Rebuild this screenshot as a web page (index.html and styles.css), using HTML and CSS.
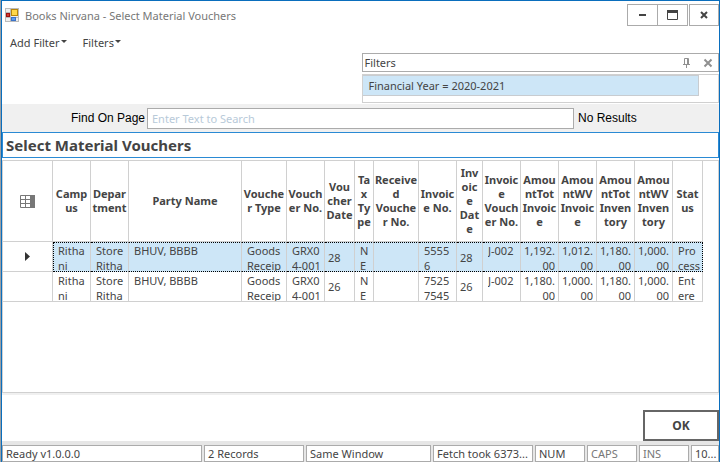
FILE: index.html
```html
<!DOCTYPE html>
<html lang="en">
<head>
<meta charset="utf-8">
<title>Books Nirvana - Select Material Vouchers</title>
<link rel="stylesheet" href="styles.css">
</head>
<body>
<div class="window">
  <header class="titlebar">
    <svg class="app-icon" width="14" height="14" viewBox="0 0 14 14" aria-hidden="true">
      <rect x="0.5" y="0.5" width="13" height="13" fill="#eee" stroke="#bbb"/>
      <path d="M1 9.500h12M5.500 1v12M1 4.500h5" stroke="#bbb" fill="none"/>
      <rect x="6.500" y="1.500" width="6" height="6" fill="#ffd84a" stroke="#b8860b"/>
      <rect x="1.500" y="5.500" width="3" height="3" fill="#d33a2c" stroke="#a01010"/>
      <rect x="6.500" y="9.500" width="4" height="3" fill="#5b9bf0" stroke="#3a72c8"/>
    </svg>
    <h1 class="title">Books Nirvana - Select Material Vouchers</h1>
    <div class="window-buttons">
      <button type="button" class="win-btn" aria-label="Minimize"><svg width="12" height="12" viewBox="0 0 12 12"><path d="M2 6h7" stroke="#444" stroke-width="2"/></svg></button>
      <button type="button" class="win-btn" aria-label="Maximize"><svg width="12" height="12" viewBox="0 0 12 12"><path d="M0.500 1.500h10v9h-10z" fill="none" stroke="#444"/><path d="M0 2.500h11" stroke="#444" stroke-width="3"/></svg></button>
      <button type="button" class="win-btn close" aria-label="Close"><svg width="12" height="12" viewBox="0 0 12 12"><path d="M3 3l6 6M9 3l-6 6" stroke="#444" stroke-width="2"/></svg></button>
    </div>
  </header>
  <nav class="menu">
    <button type="button" class="menu-item">Add Filter<svg width="6" height="3" viewBox="0 0 6 3"><path d="M0 0h6L3 3z" fill="#444"/></svg></button>
    <button type="button" class="menu-item">Filters<svg width="6" height="3" viewBox="0 0 6 3"><path d="M0 0h6L3 3z" fill="#444"/></svg></button>
  </nav>
  <section class="filters">
    <div class="filters-head">
      <span class="filters-name">Filters</span>
      <button type="button" class="icon-btn" aria-label="Pin"><svg width="9" height="12" viewBox="0 0 9 12"><path d="M2.500 7V1.500h4V7M1 7.500h7M4.500 8v3M5.500 2v5" fill="none" stroke="#909090"/></svg></button>
      <button type="button" class="icon-btn" aria-label="Close filters"><svg width="10" height="10" viewBox="0 0 10 10"><path d="M1.500 1.500l7 7M8.500 1.500l-7 7" stroke="#909090" stroke-width="2"/></svg></button>
    </div>
    <div class="filters-list"><div class="filter-item">Financial Year = 2020-2021</div></div>
  </section>
  <form class="find">
    <label class="find-label" for="find">Find On Page</label>
    <input class="find-input" id="find" type="text" placeholder="Enter Text to Search">
    <span class="find-result">No Results</span>
  </form>
  <h2 class="heading">Select Material Vouchers</h2>
  <main class="content">
    <table class="grid">
      <colgroup>
        <col class="w50"><col class="w38"><col class="w38"><col class="w113"><col class="w45"><col class="w38"><col class="w30"><col class="w19"><col class="w45"><col class="w38"><col class="w26"><col class="w38"><col class="w38"><col class="w38"><col class="w38"><col class="w38"><col class="w30"><col>
      </colgroup>
      <thead>
        <tr>
          <th><svg class="grid-icon" width="15" height="13" viewBox="0 0 15 13" aria-hidden="true"><path d="M0.500 0.500h14v12h-14zM0 4.500h10M0 8.500h10M5.500 0v13" fill="none" stroke="#777"/><path d="M10 0h5v13h-5z" fill="#777"/></svg></th>
          <th>Camp<br>us</th><th>Depar<br>tment</th><th>Party Name</th><th>Vouche<br>r Type</th><th>Vouch<br>er No.</th><th>Vou<br>cher<br>Date</th><th>Ta<br>x<br>Ty<br>pe</th><th>Receive<br>d<br>Vouche<br>r No.</th><th>Invoic<br>e No.</th><th>Inv<br>oic<br>e<br>Dat<br>e</th><th>Invoic<br>e<br>Vouch<br>er No.</th><th>Amou<br>ntTot<br>Invoic<br>e</th><th>Amou<br>ntWV<br>Invoic<br>e</th><th>Amou<br>ntTot<br>Inven<br>tory</th><th>Amou<br>ntWV<br>Inven<br>tory</th><th>Stat<br>us</th><th class="filler"></th>
        </tr>
      </thead>
      <tbody>
        <tr class="selected">
          <td class="marker"><svg width="5" height="9" viewBox="0 0 5 9" aria-hidden="true"><path d="M0 0l5 4.500L0 9z" fill="#333"/></svg></td>
          <td class="first"><div class="cell">Ritha<br>ni</div></td><td><div class="cell">Store<br>Ritha</div></td><td><div class="cell">BHUV, BBBB</div></td><td><div class="cell">Goods<br>Receip</div></td><td><div class="cell">GRX0<br>4-001</div></td><td class="day">28</td><td><div class="cell">N<br>E</div></td><td></td><td><div class="cell">5555<br>6</div></td><td class="day">28</td><td><div class="cell">J-002</div></td><td class="num"><div class="cell">1,192.<br>00</div></td><td class="num"><div class="cell">1,012.<br>00</div></td><td class="num"><div class="cell">1,180.<br>00</div></td><td class="num"><div class="cell">1,000.<br>00</div></td><td class="last"><div class="cell">Pro<br>cess</div></td><td class="filler"></td>
        </tr>
        <tr>
          <td class="marker"></td>
          <td><div class="cell">Ritha<br>ni</div></td><td><div class="cell">Store<br>Ritha</div></td><td><div class="cell">BHUV, BBBB</div></td><td><div class="cell">Goods<br>Receip</div></td><td><div class="cell">GRX0<br>4-001</div></td><td class="day">26</td><td><div class="cell">N<br>E</div></td><td></td><td><div class="cell">7525<br>7545</div></td><td class="day">26</td><td><div class="cell">J-002</div></td><td class="num"><div class="cell">1,180.<br>00</div></td><td class="num"><div class="cell">1,000.<br>00</div></td><td class="num"><div class="cell">1,180.<br>00</div></td><td class="num"><div class="cell">1,000.<br>00</div></td><td class="last"><div class="cell">Ent<br>ere</div></td><td class="filler"></td>
        </tr>
      </tbody>
    </table>
  </main>
  <div class="actions"><button type="button" class="ok">OK</button></div>
  <footer class="status">
    <span class="panel s200">Ready v1.0.0.0</span>
    <span class="panel s100">2 Records</span>
    <span class="panel s125">Same Window</span>
    <span class="panel s100">Fetch took 6373...</span>
    <span class="panel s50">NUM</span>
    <span class="panel s50 off">CAPS</span>
    <span class="panel s50 off">INS</span>
    <span class="panel s28">10...</span>
  </footer>
</div>
</body>
</html>
```
FILE: styles.css
```css
* { box-sizing: border-box; }

body {
  margin: 0;
  border-left: 1px solid #9aa0a6;
  background: #fff;
  color: #444;
  font: 11px/15px "Noto Sans", "Open Sans", sans-serif;
}

button { margin: 0; padding: 0; background: #fff; color: inherit; font: inherit; }
svg { display: block; }

.window {
  display: flex;
  flex-direction: column;
  min-height: 100vh;
  margin-right: 1px;
  border: 1px solid #0a6ebd;
  border-bottom: 0;
}

.titlebar { display: flex; align-items: center; height: 28px; padding-left: 3px; }
.title { flex: 1; margin: 0 0 0 6px; color: #777; font-size: 11px; font-weight: 400; }
.window-buttons { display: flex; align-self: flex-start; padding-top: 3px; }
.win-btn { display: flex; align-items: center; justify-content: center; width: 31px; height: 22px; border: 1px solid #ababab; }
.win-btn + .win-btn { margin-left: -1px; }
.win-btn + .close { width: 30px; margin-left: 1px; }

.menu { display: flex; gap: 16px; height: 24px; padding: 6px 8px; }
.menu-item { display: flex; gap: 1px; height: 15px; border: 0; }
.menu-item svg { margin-top: 5px; }

.filters { align-self: flex-end; width: 50%; padding: 0 0 1px 1px; }
.filters-head { display: flex; align-items: center; gap: 12px; height: 19px; padding: 0 5px 0 2px; border: 1px solid #ababab; }
.filters-name { flex: 1; }
.icon-btn { border: 0; }
.filters-list { height: 29px; margin-top: 2px; border: 1px solid #d0d0d0; }
.filter-item { width: 336px; height: 21px; padding-left: 6px; border: 1px solid #c8ccd0; border-left: 0; background: #cde6f7; line-height: 19px; }

.find { display: flex; align-items: center; height: 28px; padding-left: 69px; background: #f0f0f0; color: #000; font: 12px/15px "Liberation Sans", sans-serif; }
.find-label { width: 76px; }
.find-input { flex: 0 1 427px; min-width: 0; height: 21px; padding: 0 4px; border: 1px solid #ababab; background: #fff; font: 11px/15px "Noto Sans", sans-serif; }
.find-input::placeholder { color: #b8cad9; }
.find-result { margin-left: 4px; }

.heading { height: 26px; margin: 0; padding-left: 3px; border: 1px solid #2a8ad4; font-size: 15px; font-weight: 700; line-height: 24px; }

.content { flex: 1; margin-top: 2px; border: 1px solid #d0d0d0; }
.grid { width: 100%; border-collapse: separate; border-spacing: 0; table-layout: fixed; }
.w19 { width: 19px; }
.w26 { width: 26px; }
.w30 { width: 30px; }
.w38 { width: 38px; }
.w45 { width: 45px; }
.w50 { width: 50px; }
.w113 { width: 113px; }
.grid th, .grid td { padding: 0; border-right: 1px solid #d0d0d0; border-bottom: 1px solid #d0d0d0; white-space: nowrap; }
.grid th { height: 81px; font-weight: 700; line-height: 14px; }
.grid td { height: 30px; padding-left: 5px; }
.grid .filler { border: 0; }
.grid .day { padding-left: 3px; }
.grid .num { padding: 0 3px 0 0; text-align: right; }
.cell { height: 28px; overflow: hidden; }
.grid-icon { margin: 0 auto; }
.grid .marker { padding-left: 22px; }
.grid .selected td { border-top: 1px dotted #000; border-bottom: 1px dotted #000; background: #cde6f7; }
.grid .selected .first { padding-left: 4px; border-left: 1px dotted #000; }
.grid .selected .last { border-right: 1px dotted #000; }
.grid .selected .marker { border-top: 0; border-bottom: 1px solid #d0d0d0; background: none; }
.grid .selected .filler { border: 0; background: none; }

.actions { display: flex; justify-content: flex-end; height: 48px; padding-top: 15px; border-top: 2px solid #f0f0f0; }
.ok { width: 76px; border: 2px solid #666; font-size: 12px; font-weight: 700; }

.status { display: flex; gap: 2px; height: 21px; padding-top: 4px; background: #e6e6e6; }
.panel { height: 17px; padding-left: 3px; border: 1px solid #ababab; background: #fff; overflow: hidden; white-space: nowrap; }
.off { color: #777; }
.s28 { flex: 0 0 28px; }
.s50 { flex: 0 0 50px; }
.s100 { flex: 0 0 100px; }
.s125 { flex: 0 0 125px; }
.s200 { flex: 1; }
```
